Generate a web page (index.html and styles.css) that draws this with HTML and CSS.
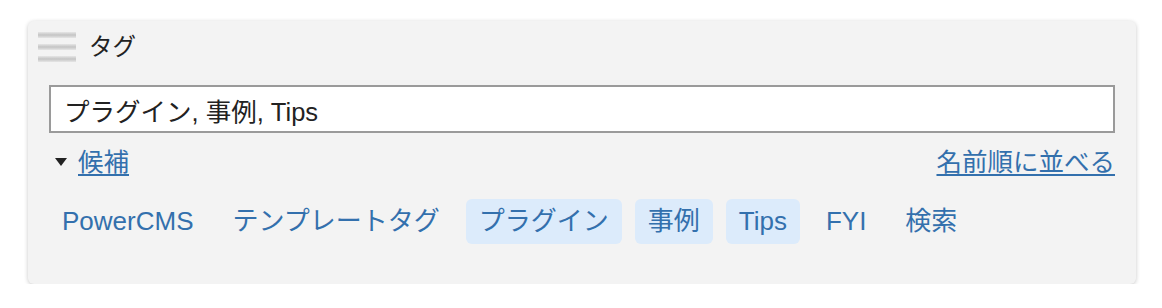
FILE: index.html
```html
<!DOCTYPE html>
<html lang="ja">
<head>
<meta charset="utf-8">
<title>タグ</title>
<link rel="stylesheet" href="styles.css">
</head>
<body>
<div class="panel">
  <div class="header">
    <span class="grip"><i></i><i></i><i></i></span>
    <span class="title">タグ</span>
  </div>
  <div class="content">
    <input class="tag-input" type="text" value="プラグイン, 事例, Tips">
    <div class="cand-row">
      <div class="cand-left"><span class="tri"></span><a class="link" href="#">候補</a></div>
      <a class="link" href="#">名前順に並べる</a>
    </div>
    <div class="tags">
      <span class="tag">PowerCMS</span>
      <span class="tag">テンプレートタグ</span>
      <span class="tag on">プラグイン</span>
      <span class="tag on">事例</span>
      <span class="tag on">Tips</span>
      <span class="tag">FYI</span>
      <span class="tag">検索</span>
    </div>
  </div>
</div>
</body>
</html>
```
FILE: styles.css
```css
html, body { margin: 0; padding: 0; background: #fff; }
body {
  font-family: "Liberation Sans", "Noto Sans CJK JP", sans-serif;
  color: #222;
}
.panel {
  box-sizing: border-box;
  margin: 21px 0 0 28px;
  width: 1108px;
  height: 263px;
  background: #f3f3f3;
  border-radius: 6px;
  box-shadow: 0 1px 4px rgba(0,0,0,0.22);
  padding-top: 11px;
}
.header {
  display: flex;
  align-items: center;
  height: 30px;
  padding-left: 10px;
}
.grip {
  display: flex;
  flex-direction: column;
  gap: 6px;
  width: 38px;
}
.grip i {
  display: block;
  height: 6px;
  background: linear-gradient(#e6e6e6, #c4c4c4 50%, #e6e6e6);
}
.title {
  margin-left: 13px;
  font-size: 23.5px;
  line-height: 30px;
}
.content { padding: 0 21px; }
.tag-input {
  display: block;
  box-sizing: border-box;
  margin-top: 23px;
  width: 100%;
  height: 48px;
  border: 2px solid #9a9a9a;
  border-radius: 0;
  background: #fff;
  padding: 0 13px;
  font-family: "Liberation Sans", "Noto Sans CJK JP", sans-serif;
  font-size: 25.5px;
  color: #222;
  outline: none;
}
.cand-row {
  display: flex;
  justify-content: space-between;
  align-items: center;
  margin-top: 14px;
  height: 30px;
}
.cand-left { display: flex; align-items: center; }
.tri {
  width: 0; height: 0;
  margin-left: 6px;
  border-left: 6.5px solid transparent;
  border-right: 6.5px solid transparent;
  border-top: 8px solid #222;
  margin-right: 11px;
}
.link {
  color: #3370ad;
  font-size: 25.5px;
  line-height: 30px;
  text-decoration: underline;
  text-underline-offset: 3px;
  text-decoration-thickness: 2px;
}
.tags {
  display: flex;
  gap: 13px;
  margin-top: 22px;
}
.tag {
  display: block;
  height: 45px;
  line-height: 45px;
  padding: 0 13px;
  border-radius: 6px;
  color: #3370ad;
  font-size: 26px;
}
.tag.on { background: #dcebfb; }
```
